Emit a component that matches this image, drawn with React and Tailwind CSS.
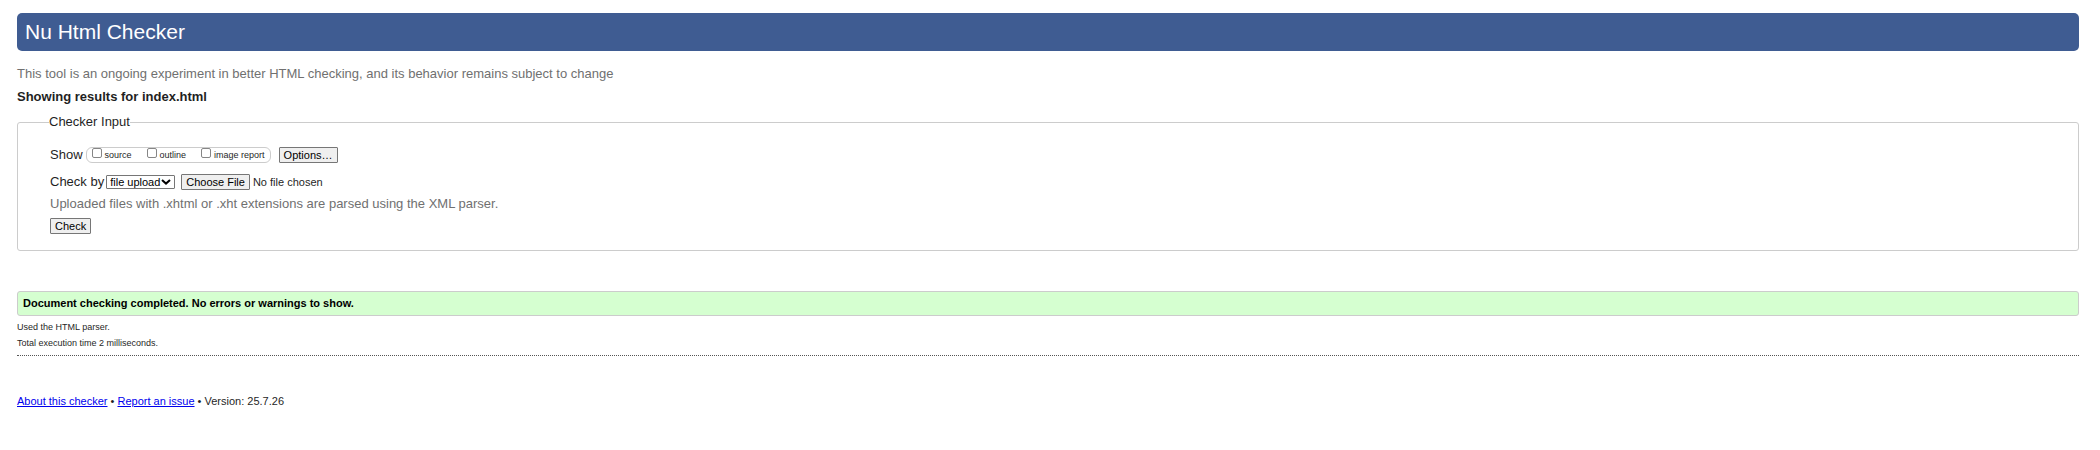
const buttonClass =
  "h-4 border border-[#767676] rounded-[1px] bg-[#efefef] px-1 text-[11px] leading-[14px] text-black";

const views = ["source", "outline", "image report"];

function ViewToggle({ name }) {
  return (
    <label className="flex items-center gap-[3px]">
      <input
        type="checkbox"
        className="mb-1 size-[10px] appearance-none rounded-[2px] border border-[#868686] bg-white checked:bg-[#3f5c92]"
      />
      {name}
    </label>
  );
}

function CheckerForm() {
  return (
    <form onSubmit={(e) => e.preventDefault()}>
      <fieldset className="rounded-[3px] border border-[#cccccc] pt-[17px] pr-8 pb-4 pl-8 text-[13px] leading-4">
        <legend className="-ml-px">Checker Input</legend>
        <div className="flex h-4 items-center">
          <span>Show</span>
          <div className="mr-2 ml-[3px] flex h-4 items-center gap-[15px] rounded-md border border-[#cccccc] px-[5px] text-[9px] leading-[14px]">
            {views.map((name) => (
              <ViewToggle key={name} name={name} />
            ))}
          </div>
          <button type="button" className={buttonClass}>
            Options…
          </button>
        </div>
        <div className="mt-[11px] flex h-4 items-center">
          <label htmlFor="method">Check by</label>
          <div className="relative mr-[6px] ml-[2px] flex items-center">
            <select
              id="method"
              className="h-[14px] w-[69px] appearance-none rounded-[1px] border border-[#767676] bg-white pl-[3px] text-[11px] leading-3 text-black"
            >
              <option>file upload</option>
              <option>address</option>
              <option>text input</option>
            </select>
            <svg
              viewBox="0 0 10 6"
              className="pointer-events-none absolute right-1 h-[6px] w-[10px]"
              fill="none"
              stroke="black"
              strokeWidth="2"
              aria-hidden="true"
            >
              <path d="M1 1 L5 4.6 L9 1" />
            </svg>
          </div>
          <input
            type="file"
            aria-label="File to check"
            className="h-4 text-[11px] leading-[14px] file:mr-[3px] file:h-4 file:rounded-[1px] file:border file:border-solid file:border-[#767676] file:bg-[#efefef] file:px-1 file:text-[11px] file:leading-[14px] file:text-black"
          />
        </div>
        <p className="mt-[6px] text-[#707070]">
          Uploaded files with .xhtml or .xht extensions are parsed using the XML parser.
        </p>
        <button type="submit" className={`${buttonClass} mt-[6px] block`}>
          Check
        </button>
      </fieldset>
    </form>
  );
}

export default function App() {
  return (
    <div className="bg-white pt-[13px] pr-[21px] pb-10 pl-[17px] font-['Liberation_Sans',Arial,sans-serif] text-[13px] leading-4 text-[#1f1f1f]">
      <h1 className="rounded-[5px] bg-[#3f5c92] px-2 py-[7px] text-[21px] leading-6 text-white">
        Nu Html Checker
      </h1>
      <p className="mt-[15px] text-[#707070]">
        This tool is an ongoing experiment in better HTML checking, and its behavior remains
        subject to change
      </p>
      <h2 className="mt-[7px] mb-[9px] font-bold">Showing results for index.html</h2>
      <CheckerForm />
      <section className="mt-10">
        <p className="rounded-[3px] border border-[#cccccc] bg-[#d5ffd0] px-[5px] py-1 text-[11px] leading-[15px] font-bold text-black">
          Document checking completed. No errors or warnings to show.
        </p>
        <p className="mt-[3px] text-[9px]">Used the HTML parser.</p>
        <p className="text-[9px]">Total execution time 2 milliseconds.</p>
      </section>
      <footer className="mt-1 border-t border-dotted border-[#555555] pt-[37px] text-[11px]">
        <a href="#about" className="text-[#0000ee] underline">
          About this checker
        </a>{" "}
        •{" "}
        <a href="#issue" className="text-[#0000ee] underline">
          Report an issue
        </a>{" "}
        • Version: 25.7.26
      </footer>
    </div>
  );
}
